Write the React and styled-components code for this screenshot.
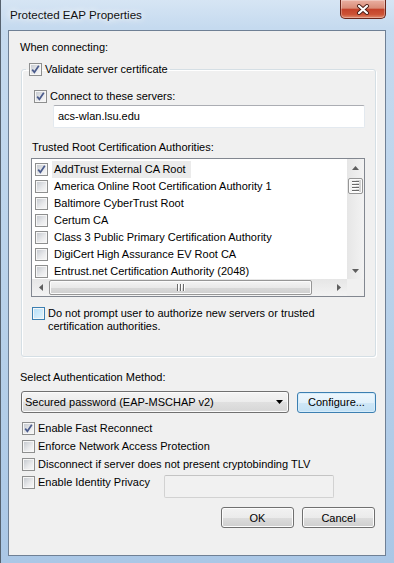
import styled, { createGlobalStyle } from "styled-components";

const GlobalStyle = createGlobalStyle`
  html, body { margin: 0; padding: 0; }
  body {
    width: 394px;
    height: 563px;
    overflow: hidden;
    font-family: "Liberation Sans", Arial, sans-serif;
    font-size: 11px;
    color: #000;
  }
`;

const Frame = styled.div`
  box-sizing: border-box;
  width: 394px;
  height: 563px;
  display: flex;
  flex-direction: column;
  padding: 0 8px 7px 7px;
  border-left: 1px solid #56626f;
  background: linear-gradient(180deg, #d6e5f4 0%, #c5daef 28px, #b9d2ea 50%, #aac7e6 100%);
`;

const TitleBar = styled.div`
  height: 30px;
  display: flex;
  align-items: center;
  padding-left: 2px;
`;

const Title = styled.div`
  font-size: 11.6px;
  color: #111;
  text-shadow: 0 0 6px #fff, 0 0 10px #fff;
  padding-bottom: 1px;
`;

const CloseButton = styled.div`
  box-sizing: border-box;
  width: 46px;
  height: 19px;
  margin-left: auto;
  align-self: flex-start;
  border: 1px solid #6a261b;
  border-top: none;
  border-radius: 0 0 5px 5px;
  background: linear-gradient(180deg, #eab0a2 0%, #d98c78 45%, #c4432b 52%, #cc5336 80%, #e08a6d 100%);
  box-shadow: inset 0 0 0 1px rgba(255, 255, 255, 0.3);
  display: flex;
  align-items: center;
  justify-content: center;
`;

const Client = styled.div`
  flex: 1;
  display: flex;
  flex-direction: column;
  border: 1px solid #6f8095;
  background: #f0f0f0;
  padding: 10px 9px 0 11px;
`;

const Text = styled.div`
  line-height: 13px;
  margin-top: ${p => p.$top || 0}px;
  margin-left: ${p => p.$left || 0}px;
  white-space: nowrap;
`;

const Group = styled.fieldset`
  margin: 9px 0 0 1px;
  min-width: 0;
  padding: 0 10px 23px 10px;
  border: 1px solid #d5dfe5;
  border-radius: 3px;
  box-shadow: inset 1px 1px 0 #fff, 1px 1px 0 #fff;
`;

const Legend = styled.legend`
  margin-left: -6px;
  padding: 0 2px 0 3px;
`;

const CheckRow = styled.div`
  display: flex;
  align-items: ${p => (p.$multi ? "flex-start" : "center")};
  gap: 2px;
  margin-top: ${p => p.$top || 0}px;
  margin-left: ${p => p.$left || 0}px;
  line-height: 13px;
`;

const Box = styled.span`
  box-sizing: border-box;
  flex: none;
  width: 13px;
  height: 13px;
  padding: 1px;
  border: 1px solid ${p => (p.$hot ? "#3c7fb1" : "#8e8f8f")};
  background: #f6f6f6;
  display: flex;
`;

const BoxFill = styled.span`
  flex: 1;
  display: flex;
  align-items: center;
  justify-content: center;
  background: ${p =>
    p.$hot
      ? "linear-gradient(135deg, #b9e0f8 0%, #dff2fd 100%)"
      : "linear-gradient(135deg, #c7cbd1 0%, #e9eaec 60%, #f6f6f6 100%)"};
`;

const CheckLabel = styled.span`
  width: ${p => (p.$width ? `${p.$width}px` : "auto")};
  flex: none;
  padding-left: 1px;
`;

const TextInput = styled.div`
  box-sizing: border-box;
  height: 23px;
  margin-top: ${p => p.$top || 0}px;
  margin-left: ${p => p.$left || 0}px;
  width: ${p => (p.$width ? `${p.$width}px` : "auto")};
  border: 1px solid ${p => (p.$disabled ? "#d2d2d2" : "#e3e9ef")};
  border-top-color: ${p => (p.$disabled ? "#c4c4c4" : "#abadb3")};
  border-radius: 2px;
  background: ${p => (p.$disabled ? "#f1f1f1" : "#fff")};
  display: flex;
  align-items: center;
  padding-left: 4px;
  line-height: 13px;
`;

const ListBox = styled.div`
  box-sizing: border-box;
  height: 139px;
  margin: 4px 0 0 -1px;
  border: 1px solid #828790;
  background: #fff;
  display: grid;
  grid-template-columns: 1fr 17px;
  grid-template-rows: 1fr 17px;
  overflow: hidden;
`;

const Rows = styled.div`
  padding: 2px 0 0 3px;
  overflow: hidden;
`;

const ListRow = styled.div`
  height: 17px;
  display: flex;
  align-items: center;
`;

const ItemText = styled.span`
  margin-left: 4px;
  padding: 0 5px 0 2px;
  height: 17px;
  line-height: 17px;
  white-space: nowrap;
  background: ${p => (p.$selected ? "#ebebeb" : "transparent")};
`;

const VScroll = styled.div`
  display: flex;
  flex-direction: column;
  background: linear-gradient(90deg, #e6e6e6 0%, #f3f3f3 100%);
`;

const HScroll = styled.div`
  display: flex;
  background: linear-gradient(180deg, #e6e6e6 0%, #f3f3f3 100%);
`;

const Corner = styled.div`
  background: #f0f0f0;
`;

const ArrowCell = styled.div`
  flex: none;
  width: 17px;
  height: 17px;
  display: flex;
  align-items: center;
  justify-content: center;
`;

const Track = styled.div`
  flex: 1;
  display: flex;
  flex-direction: ${p => (p.$vertical ? "column" : "row")};
  padding: ${p => (p.$vertical ? "2px 1px 0 1px" : "1px 0 1px 0")};
`;

const Thumb = styled.div`
  box-sizing: border-box;
  flex: none;
  width: ${p => (p.$vertical ? "auto" : `${p.$size}px`)};
  height: ${p => (p.$vertical ? `${p.$size}px` : "auto")};
  border: 1px solid #969696;
  border-radius: 2px;
  background: ${p =>
    p.$vertical
      ? "linear-gradient(90deg, #f4f4f4 0%, #e9e9e9 50%, #d8d8d8 51%, #d0d0d0 100%)"
      : "linear-gradient(180deg, #f4f4f4 0%, #e9e9e9 50%, #d8d8d8 51%, #d0d0d0 100%)"};
  box-shadow: inset 0 0 0 1px #fbfbfb;
  display: flex;
  flex-direction: ${p => (p.$vertical ? "column" : "row")};
  align-items: center;
  justify-content: center;
  gap: 1px;
`;

const Grip = styled.span`
  width: ${p => (p.$vertical ? "7px" : "1px")};
  height: ${p => (p.$vertical ? "1px" : "7px")};
  background: #6a6a6a;
  box-shadow: ${p => (p.$vertical ? "0 1px 0 #fff" : "1px 0 0 #fff")};
  margin: ${p => (p.$vertical ? "0 0 1px 0" : "0 1px 0 0")};
`;

const MethodRow = styled.div`
  display: flex;
  align-items: center;
  margin-top: 7px;
`;

const Combo = styled.div`
  box-sizing: border-box;
  width: 268px;
  height: 22px;
  margin-left: 1px;
  border: 1px solid #707070;
  border-radius: 3px;
  background: linear-gradient(180deg, #f4f4f4 0%, #ececec 50%, #e0e0e0 51%, #d6d6d6 100%);
  box-shadow: inset 0 0 0 1px #fbfbfb;
  display: flex;
  align-items: center;
  justify-content: space-between;
  padding: 0 5px 0 3px;
`;

const Button = styled.div`
  box-sizing: border-box;
  width: ${p => p.$width}px;
  height: 21px;
  border: 1px solid ${p => (p.$default ? "#3c7fb1" : "#707070")};
  border-radius: 3px;
  background: ${p =>
    p.$default
      ? "linear-gradient(180deg, #eef7fd 0%, #e2f1fb 50%, #cfe7f7 51%, #c3e1f5 100%)"
      : "linear-gradient(180deg, #f2f2f2 0%, #ebebeb 50%, #dddddd 51%, #cfcfcf 100%)"};
  box-shadow: inset 0 0 0 1px ${p => (p.$default ? "#d6ecfa" : "#fcfcfc")};
  display: flex;
  align-items: center;
  justify-content: center;
  margin-left: ${p => p.$left || 0}px;
`;

const Options = styled.div`
  display: flex;
  flex-direction: column;
  gap: 5px;
  margin: 9px 0 0 2px;
`;

const PrivacyRow = styled.div`
  display: flex;
  align-items: flex-start;
`;

const Footer = styled.div`
  display: flex;
  justify-content: flex-end;
  gap: 8px;
  margin-top: 9px;
  padding-right: 1px;
`;

function Check({ checked, hot }) {
  return (
    <Box $hot={hot}>
      <BoxFill $hot={hot}>
        {checked && (
          <svg width="9" height="9" viewBox="0 0 9 9">
            <path d="M1.2 4.6 L3.4 7.3 L7.8 0.8" fill="none" stroke="#4a5b8c" strokeWidth="1.7" />
          </svg>
        )}
      </BoxFill>
    </Box>
  );
}

function Tri({ dir, color = "#5e5e5e" }) {
  const pts = {
    up: "0,4 3.5,0 7,4",
    down: "0,0 3.5,4 7,0",
    left: "4,0 0,3.5 4,7",
    right: "0,0 4,3.5 0,7",
  }[dir];
  const vertical = dir === "up" || dir === "down";
  return (
    <svg width={vertical ? 7 : 4} height={vertical ? 4 : 7} viewBox={vertical ? "0 0 7 4" : "0 0 4 7"}>
      <polygon points={pts} fill={color} />
    </svg>
  );
}

const authorities = [
  "AddTrust External CA Root",
  "America Online Root Certification Authority 1",
  "Baltimore CyberTrust Root",
  "Certum CA",
  "Class 3 Public Primary Certification Authority",
  "DigiCert High Assurance EV Root CA",
  "Entrust.net Certification Authority (2048)",
];

export default function App() {
  return (
    <>
      <GlobalStyle />
      <Frame>
        <TitleBar>
          <Title>Protected EAP Properties</Title>
          <CloseButton>
            <svg width="14" height="11" viewBox="0 0 14 11">
              <path d="M3 2 L11 9 M11 2 L3 9" stroke="#4a1d16" strokeWidth="4" strokeLinecap="round" />
              <path d="M3 2 L11 9 M11 2 L3 9" stroke="#fff" strokeWidth="2.2" strokeLinecap="round" />
            </svg>
          </CloseButton>
        </TitleBar>
        <Client>
          <Text>When connecting:</Text>
          <Group>
            <Legend>
              <CheckRow>
                <Check checked />
                <CheckLabel>Validate server certificate</CheckLabel>
              </CheckRow>
            </Legend>
            <CheckRow $top={14} $left={2}>
              <Check checked />
              <CheckLabel>Connect to these servers:</CheckLabel>
            </CheckRow>
            <TextInput $top={2} $left={21}>acs-wlan.lsu.edu</TextInput>
            <Text $top={13}>Trusted Root Certification Authorities:</Text>
            <ListBox>
              <Rows>
                {authorities.map((name, i) => (
                  <ListRow key={name}>
                    <Check checked={i === 0} />
                    <ItemText $selected={i === 0}>{name}</ItemText>
                  </ListRow>
                ))}
              </Rows>
              <VScroll>
                <ArrowCell><Tri dir="up" /></ArrowCell>
                <Track $vertical>
                  <Thumb $vertical $size={16}>
                    <Grip $vertical />
                    <Grip $vertical />
                    <Grip $vertical />
                    <Grip $vertical />
                  </Thumb>
                </Track>
                <ArrowCell><Tri dir="down" /></ArrowCell>
              </VScroll>
              <HScroll>
                <ArrowCell><Tri dir="left" /></ArrowCell>
                <Track>
                  <Thumb $size={263}>
                    <Grip />
                    <Grip />
                    <Grip />
                  </Thumb>
                </Track>
                <ArrowCell><Tri dir="right" /></ArrowCell>
              </HScroll>
              <Corner />
            </ListBox>
            <CheckRow $multi $top={10}>
              <Check hot />
              <CheckLabel>
                Do not prompt user to authorize new servers or trusted
                <br />
                certification authorities.
              </CheckLabel>
            </CheckRow>
          </Group>
          <Text $top={14}>Select Authentication Method:</Text>
          <MethodRow>
            <Combo>
              <span>Secured password (EAP-MSCHAP v2)</span>
              <Tri dir="down" color="#000" />
            </Combo>
            <Button $default $width={79} $left={8}>Configure...</Button>
          </MethodRow>
          <Options>
            <CheckRow>
              <Check checked />
              <CheckLabel>Enable Fast Reconnect</CheckLabel>
            </CheckRow>
            <CheckRow>
              <Check />
              <CheckLabel>Enforce Network Access Protection</CheckLabel>
            </CheckRow>
            <CheckRow>
              <Check />
              <CheckLabel>Disconnect if server does not present cryptobinding TLV</CheckLabel>
            </CheckRow>
            <PrivacyRow>
              <CheckRow>
                <Check />
                <CheckLabel $width={126}>Enable Identity Privacy</CheckLabel>
              </CheckRow>
              <TextInput $disabled $top={-1} $width={170} />
            </PrivacyRow>
          </Options>
          <Footer>
            <Button $width={73}>OK</Button>
            <Button $width={73}>Cancel</Button>
          </Footer>
        </Client>
      </Frame>
    </>
  );
}
